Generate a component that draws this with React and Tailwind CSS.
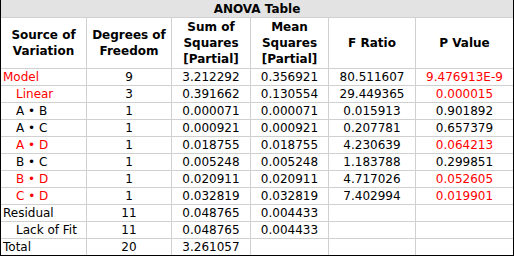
const rows = [
  { src: "Model", indent: false, red: true, df: "9", ss: "3.212292", ms: "0.356921", f: "80.511607", p: "9.476913E-9", pRed: true },
  { src: "Linear", indent: true, red: true, df: "3", ss: "0.391662", ms: "0.130554", f: "29.449365", p: "0.000015", pRed: true },
  { src: "A • B", indent: true, df: "1", ss: "0.000071", ms: "0.000071", f: "0.015913", p: "0.901892" },
  { src: "A • C", indent: true, df: "1", ss: "0.000921", ms: "0.000921", f: "0.207781", p: "0.657379" },
  { src: "A • D", indent: true, red: true, df: "1", ss: "0.018755", ms: "0.018755", f: "4.230639", p: "0.064213", pRed: true },
  { src: "B • C", indent: true, df: "1", ss: "0.005248", ms: "0.005248", f: "1.183788", p: "0.299851" },
  { src: "B • D", indent: true, red: true, df: "1", ss: "0.020911", ms: "0.020911", f: "4.717026", p: "0.052605", pRed: true },
  { src: "C • D", indent: true, red: true, df: "1", ss: "0.032819", ms: "0.032819", f: "7.402994", p: "0.019901", pRed: true },
  { src: "Residual", indent: false, df: "11", ss: "0.048765", ms: "0.004433", f: "", p: "" },
  { src: "Lack of Fit", indent: true, df: "11", ss: "0.048765", ms: "0.004433", f: "", p: "" },
  { src: "Total", indent: false, df: "20", ss: "3.261057", ms: "", f: "", p: "" },
];

const headers = [
  ["Source of", "Variation"],
  ["Degrees of", "Freedom"],
  ["Sum of", "Squares", "[Partial]"],
  ["Mean", "Squares", "[Partial]"],
  ["F Ratio"],
  ["P Value"],
];

const grid = "grid grid-cols-[86px_85px_79px_78px_87px_97px]";

export default function App() {
  return (
    <div
      className="w-[514px] h-[256px] bg-white border-l border-r border-b border-black text-[12px] text-black overflow-hidden"
      style={{ fontFamily: '"DejaVu Sans", Verdana, sans-serif' }}
    >
      <div className="h-[18px] bg-[#e3e3e3] border-b border-[#d0d0d0] flex items-center justify-center font-bold">
        ANOVA Table
      </div>
      <div className={grid}>
        {headers.map((lines, i) => (
          <div
            key={i}
            className={`h-[51px] border-b border-[#d0d0d0] flex flex-col items-center justify-center font-bold leading-[16px] ${i < 5 ? "border-r" : ""}`}
          >
            {lines.map((l) => (
              <span key={l}>{l}</span>
            ))}
          </div>
        ))}
      </div>
      {rows.map((r, idx) => {
        const last = idx === rows.length - 1;
        const rowH = last ? "h-[16px]" : "h-[17px] border-b";
        return (
          <div key={r.src} className={grid}>
            <div
              className={`${rowH} border-r border-[#d0d0d0] flex items-center ${r.indent ? "pl-[15px]" : "pl-[2px]"} ${r.red ? "text-[#ff0000]" : ""}`}
            >
              {r.src}
            </div>
            <div className={`${rowH} border-r border-[#d0d0d0] flex items-center justify-center`}>{r.df}</div>
            <div className={`${rowH} border-r border-[#d0d0d0] flex items-center justify-center`}>{r.ss}</div>
            <div className={`${rowH} border-r border-[#d0d0d0] flex items-center justify-center`}>{r.ms}</div>
            <div className={`${rowH} border-r border-[#d0d0d0] flex items-center justify-center`}>{r.f}</div>
            <div className={`${rowH} border-[#d0d0d0] flex items-center justify-center ${r.pRed ? "text-[#ff0000]" : ""}`}>
              {r.p}
            </div>
          </div>
        );
      })}
    </div>
  );
}
